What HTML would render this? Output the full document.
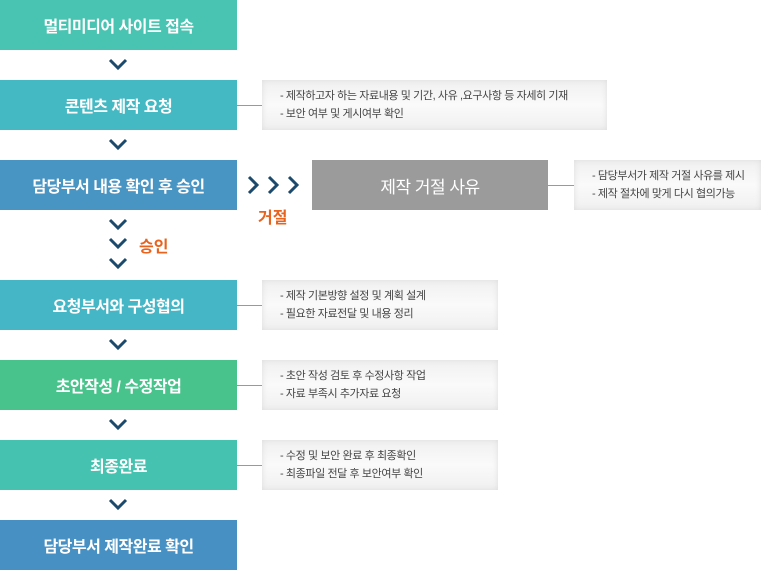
<html><head><style>
body{margin:0;width:761px;height:570px;background:#fff;position:relative;font-family:"Liberation Sans","Noto Sans CJK KR",sans-serif;overflow:hidden}
.b{position:absolute;left:0;width:237px;height:50px;color:#fff;font-size:16px;font-weight:bold;display:flex;align-items:center;justify-content:center;letter-spacing:-0.5px}
.n{position:absolute;height:50px;background:linear-gradient(#f0f0f0,#fafafa 50%,#f0f0f0);box-shadow:inset 0 0 6px #ddd;font-size:11px;color:#444;display:flex;flex-direction:column;justify-content:center;padding-left:18px;box-sizing:border-box;line-height:18px;letter-spacing:-0.4px}
.l{position:absolute;height:1px;background:#999}
.c{position:absolute;width:18px;height:12px}
.o{position:absolute;color:#e8641e;font-weight:bold;font-size:16px}
</style></head><body>
<div class="b" style="top:0;background:#4ac4b2">멀티미디어 사이트 접속</div>
<div class="b" style="top:80;top:80px;background:#45b9c3">콘텐츠 제작 요청</div>
<div class="b" style="top:160px;background:#4894c3">담당부서 내용 확인 후 승인</div>
<div class="b" style="top:280px;background:#45b6c6">요청부서와 구성협의</div>
<div class="b" style="top:360px;background:#47c38b">초안작성 / 수정작업</div>
<div class="b" style="top:440px;background:#45c3b0">최종완료</div>
<div class="b" style="top:520px;background:#4790c3">담당부서 제작완료 확인</div>
<div class="b" style="top:160px;left:312px;width:236px;background:#9b9b9b;font-weight:normal;font-size:17px">제작 거절 사유</div>

<div class="l" style="left:237px;width:25px;top:105px"></div>
<div class="n" style="left:262px;top:80px;width:345px">- 제작하고자 하는 자료내용 및 기간, 사유 ,요구사항 등 자세히 기재<br>- 보안 여부 및 게시여부 확인</div>
<div class="l" style="left:548px;width:26px;top:185px"></div>
<div class="n" style="left:574px;top:160px;width:187px">- 담당부서가 제작 거절 사유를 제시<br>- 제작 절차에 맞게 다시 협의가능</div>
<div class="l" style="left:237px;width:25px;top:305px"></div>
<div class="n" style="left:262px;top:280px;width:236px">- 제작 기본방향 설정 및 계획 설계<br>- 필요한 자료전달 및 내용 정리</div>
<div class="l" style="left:237px;width:25px;top:385px"></div>
<div class="n" style="left:262px;top:360px;width:236px">- 초안 작성 검토 후 수정사항 작업<br>- 자료 부족시 추가자료 요청</div>
<div class="l" style="left:237px;width:25px;top:465px"></div>
<div class="n" style="left:262px;top:440px;width:236px">- 수정 및 보안 완료 후 최종확인<br>- 최종파일 전달 후 보안여부 확인</div>

<svg style="position:absolute;left:0;top:0" width="761" height="570" fill="none" stroke="#1b4a6c" stroke-width="3">
<path d="M110 60l8 8 8-8M110 140l8 8 8-8M110 220l8 8 8-8M110 239l8 8 8-8M110 259l8 8 8-8M110 340l8 8 8-8M110 420l8 8 8-8M110 500l8 8 8-8"/>
<path d="M249 177l8 8-8 8M269 177l8 8-8 8M289 177l8 8-8 8"/>
</svg>
<div class="o" style="left:258px;top:204px">거절</div>
<div class="o" style="left:139px;top:233px">승인</div>
</body></html>
